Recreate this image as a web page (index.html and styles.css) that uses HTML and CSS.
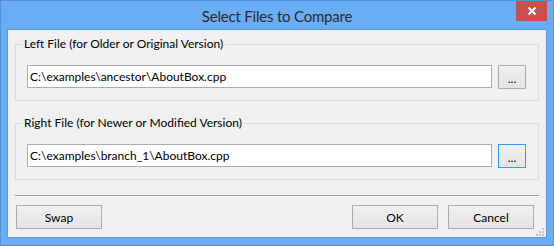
FILE: index.html
```html
<!DOCTYPE html>
<html lang="en">
<head>
    <meta charset="UTF-8">
    <title>Select Files to Compare</title>
    <link rel="stylesheet" href="styles.css">
</head>
<body>
    <div class="window">
        <div class="titlebar">
            <span class="title">Select Files to Compare</span>
            <button class="close-btn" title="Close">
                <svg width="10" height="8" viewBox="0 0 10 8">
                    <path d="M1.5 0.5 L8.5 7.5 M8.5 0.5 L1.5 7.5" stroke="#fff" stroke-width="2" fill="none" />
                </svg>
            </button>
        </div>

        <div class="client">
            <fieldset class="group">
                <legend>Left File (for Older or Original Version)</legend>
                <div class="file-row">
                    <input class="path" type="text" value="C:\examples\ancestor\AboutBox.cpp">
                    <button class="btn browse-btn">...</button>
                </div>
            </fieldset>

            <fieldset class="group">
                <legend>Right File (for Newer or Modified Version)</legend>
                <div class="file-row">
                    <input class="path" type="text" value="C:\examples\branch_1\AboutBox.cpp">
                    <button class="btn browse-btn focused">...</button>
                </div>
            </fieldset>

            <div class="separator"></div>

            <div class="actions">
                <button class="btn">Swap</button>
                <button class="btn ok-btn">OK</button>
                <button class="btn">Cancel</button>
            </div>

            <svg class="grip" width="9" height="9" viewBox="0 0 9 9">
                <!-- size grip dots -->
                <rect x="7" y="1" width="2" height="2" fill="#c4c4c4" />
                <rect x="4" y="4" width="2" height="2" fill="#c4c4c4" />
                <rect x="7" y="4" width="2" height="2" fill="#c4c4c4" />
                <rect x="1" y="7" width="2" height="2" fill="#c4c4c4" />
                <rect x="4" y="7" width="2" height="2" fill="#c4c4c4" />
                <rect x="7" y="7" width="2" height="2" fill="#c4c4c4" />
            </svg>
        </div>
    </div>
</body>
</html>
```

FILE: styles.css
```css
* {
    margin: 0;
    padding: 0;
    box-sizing: border-box;
}

body {
    width: 554px;
    height: 246px;
    overflow: hidden;
    font-family: 'Lato', 'Noto Sans', sans-serif;
    font-size: 12px;
    color: #000;
}

.window {
    width: 554px;
    height: 246px;
    background: #6badf5;
    border: 1px solid #5290d8;
    padding: 0 6px 7px;
    display: flex;
    flex-direction: column;
}

.titlebar {
    height: 29px;
    position: relative;
    display: flex;
    align-items: center;
    justify-content: center;
}

.title {
    font-size: 15px;
    letter-spacing: -0.2px;
    color: #2b2b2b;
    padding-top: 1px;
}

.close-btn {
    position: absolute;
    top: 0;
    right: 0;
    width: 31px;
    height: 20px;
    border: none;
    background: #c75050;
    display: flex;
    align-items: center;
    justify-content: center;
}

.client {
    flex: 1;
    position: relative;
    background: #f0f0f0;
    border: 1px solid #5b98dc;
    padding: 6px 0 8px;
    display: flex;
    flex-direction: column;
}

.group {
    margin: 0 7px;
    border: 1px solid #dcdcdc;
    padding: 13px 12px 11px 11px;
}

.group + .group {
    margin-top: 14px;
}

.group legend {
    margin-left: -5px;
    padding: 0 2px;
    line-height: 16px;
}

.file-row {
    display: flex;
    align-items: flex-start;
    gap: 6px;
}

.path {
    flex: 1;
    height: 23px;
    border: 1px solid #abadb3;
    background: #fff;
    padding: 0 2px;
    font-family: inherit;
    font-size: 12px;
    line-height: 21px;
    color: #000;
    outline: none;
}

.btn {
    width: 86px;
    height: 24px;
    border: 1px solid #acacac;
    background: linear-gradient(#f0f0f0, #e5e5e5);
    font-family: inherit;
    font-size: 12px;
    color: #000;
}

.browse-btn {
    width: 28px;
    padding-top: 2px;
}

.browse-btn.focused {
    border-color: #3399ff;
}

.separator {
    margin: 15px 7px 0;
    height: 2px;
    border-top: 1px solid #a0a0a0;
    border-bottom: 1px solid #fff;
}

.actions {
    margin-top: 8px;
    padding: 0 12px 0 8px;
    display: flex;
    gap: 10px;
}

.ok-btn {
    margin-left: auto;
}

.grip {
    position: absolute;
    right: 2px;
    bottom: 1px;
}
```
